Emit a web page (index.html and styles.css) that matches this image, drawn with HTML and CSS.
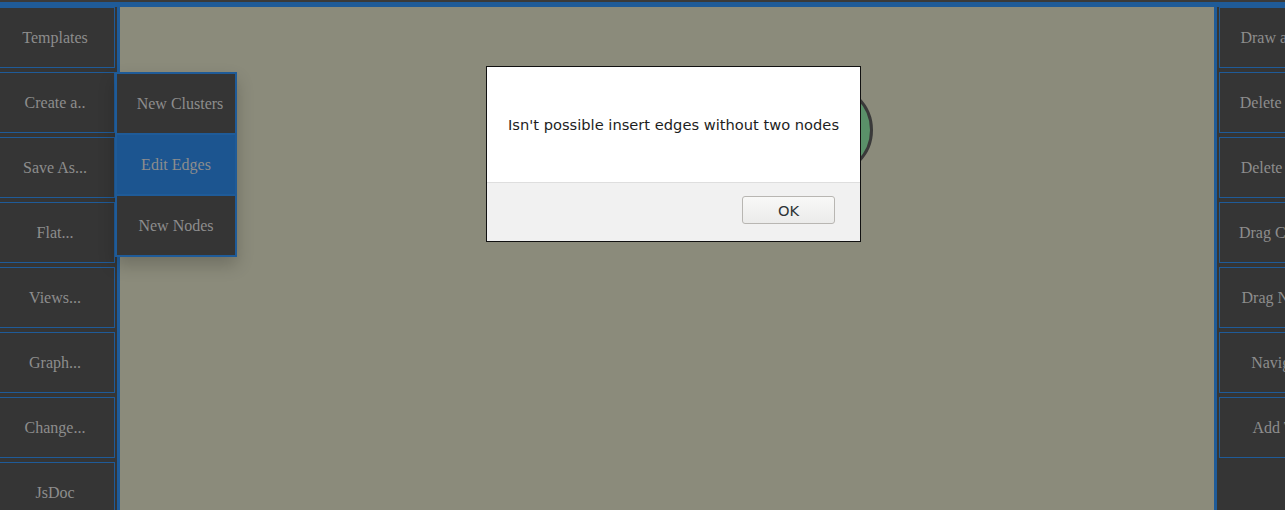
FILE: index.html
```html
<!DOCTYPE html>
<html>
<head>
<meta charset="utf-8">
<link rel="stylesheet" href="styles.css">
</head>
<body>
<div class="topline"></div>
<div class="app">
  <nav class="side side-left">
    <div class="btn">Templates</div>
    <div class="btn">Create a..</div>
    <div class="btn">Save As...</div>
    <div class="btn">Flat...</div>
    <div class="btn">Views...</div>
    <div class="btn">Graph...</div>
    <div class="btn">Change...</div>
    <div class="btn">JsDoc</div>
    <div class="dropdown">
      <div class="item">New Clusters</div>
      <div class="item active">Edit Edges</div>
      <div class="item">New Nodes</div>
    </div>
  </nav>
  <main class="canvas">
    <div class="node"></div>
  </main>
  <nav class="side side-right">
    <div class="btn">Draw a Path</div>
    <div class="btn">Delete Node</div>
    <div class="btn">Delete Edge</div>
    <div class="btn">Drag Cluster</div>
    <div class="btn">Drag Nodes</div>
    <div class="btn">Navigate</div>
    <div class="btn">Add Tag</div>
  </nav>
</div>
<div class="dialog">
  <div class="msg">Isn't possible insert edges without two nodes</div>
  <div class="actions"><button class="ok">OK</button></div>
</div>
</body>
</html>
```
FILE: styles.css
```css
html, body {
  margin: 0;
  height: 100%;
  overflow: hidden;
}
body {
  background: #353535;
  font-family: "Liberation Serif", "Times New Roman", serif;
}
.topline {
  height: 2px;
  background: #3a3a3a;
}
.app {
  display: flex;
  height: 503px;
  border-top: 5px solid #1f5b98;
}
.side {
  display: flex;
  flex-direction: column;
  gap: 4px;
  flex: none;
  background: #353535;
}
.side-left {
  position: relative;
  width: 117px;
  border-right: 3px solid #1f5b98;
}
.side-right {
  width: 124px;
  border-left: 3px solid #1f5b98;
  padding-left: 2px;
}
.btn {
  flex: none;
  box-sizing: border-box;
  height: 61px;
  border: 1px solid #1f5b98;
  background: #353535;
  color: #8d8d8d;
  font-size: 16px;
  display: flex;
  align-items: center;
  justify-content: center;
  white-space: nowrap;
}
.side-left .btn {
  width: 121px;
  margin-left: -6px;
  padding-left: 1px;
}
.side-right .btn {
  width: 122px;
}
.dropdown {
  position: absolute;
  left: 115px;
  top: 65px;
  width: 118px;
  border: 2px solid #1f5b98;
  background: #1f5b98;
  display: flex;
  flex-direction: column;
  gap: 2px;
  box-shadow: 0 8px 16px 0 rgba(0, 0, 0, 0.2);
  z-index: 2;
}
.item {
  height: 59px;
  background: #353535;
  color: #8d8d8d;
  font-size: 16px;
  display: flex;
  align-items: center;
  justify-content: center;
  white-space: nowrap;
}
.item:first-child {
  padding-left: 8px;
}
.item.active {
  background: #1c5590;
}
.canvas {
  position: relative;
  flex: none;
  width: 1094px;
  background: #8b8b7b;
}
.node {
  position: absolute;
  left: 661px;
  top: 77px;
  width: 92px;
  height: 92px;
  box-sizing: border-box;
  border: 3px solid #3a3a3a;
  border-radius: 50%;
  background: #5a9169;
}
.dialog {
  position: fixed;
  left: 486px;
  top: 66px;
  width: 375px;
  height: 176px;
  box-sizing: border-box;
  border: 1px solid #111;
  display: flex;
  flex-direction: column;
  font-family: "DejaVu Sans", sans-serif;
  font-size: 14.67px;
  color: #1e1e1e;
  z-index: 5;
}
.msg {
  height: 115px;
  flex: none;
  background: #fff;
  border-bottom: 1px solid #dedede;
  display: flex;
  align-items: center;
  justify-content: center;
  white-space: nowrap;
}
.actions {
  flex: 1;
  background: #f1f1f1;
  display: flex;
  justify-content: flex-end;
  align-items: flex-start;
  padding: 13px 25px 0 0;
}
.ok {
  width: 93px;
  height: 28px;
  border: 1px solid #b8b6b2;
  border-radius: 3px;
  background: linear-gradient(#f8f8f7, #ebebea);
  font-family: "DejaVu Sans", sans-serif;
  font-size: 14.67px;
  color: #2e3436;
  padding: 0;
}
```
